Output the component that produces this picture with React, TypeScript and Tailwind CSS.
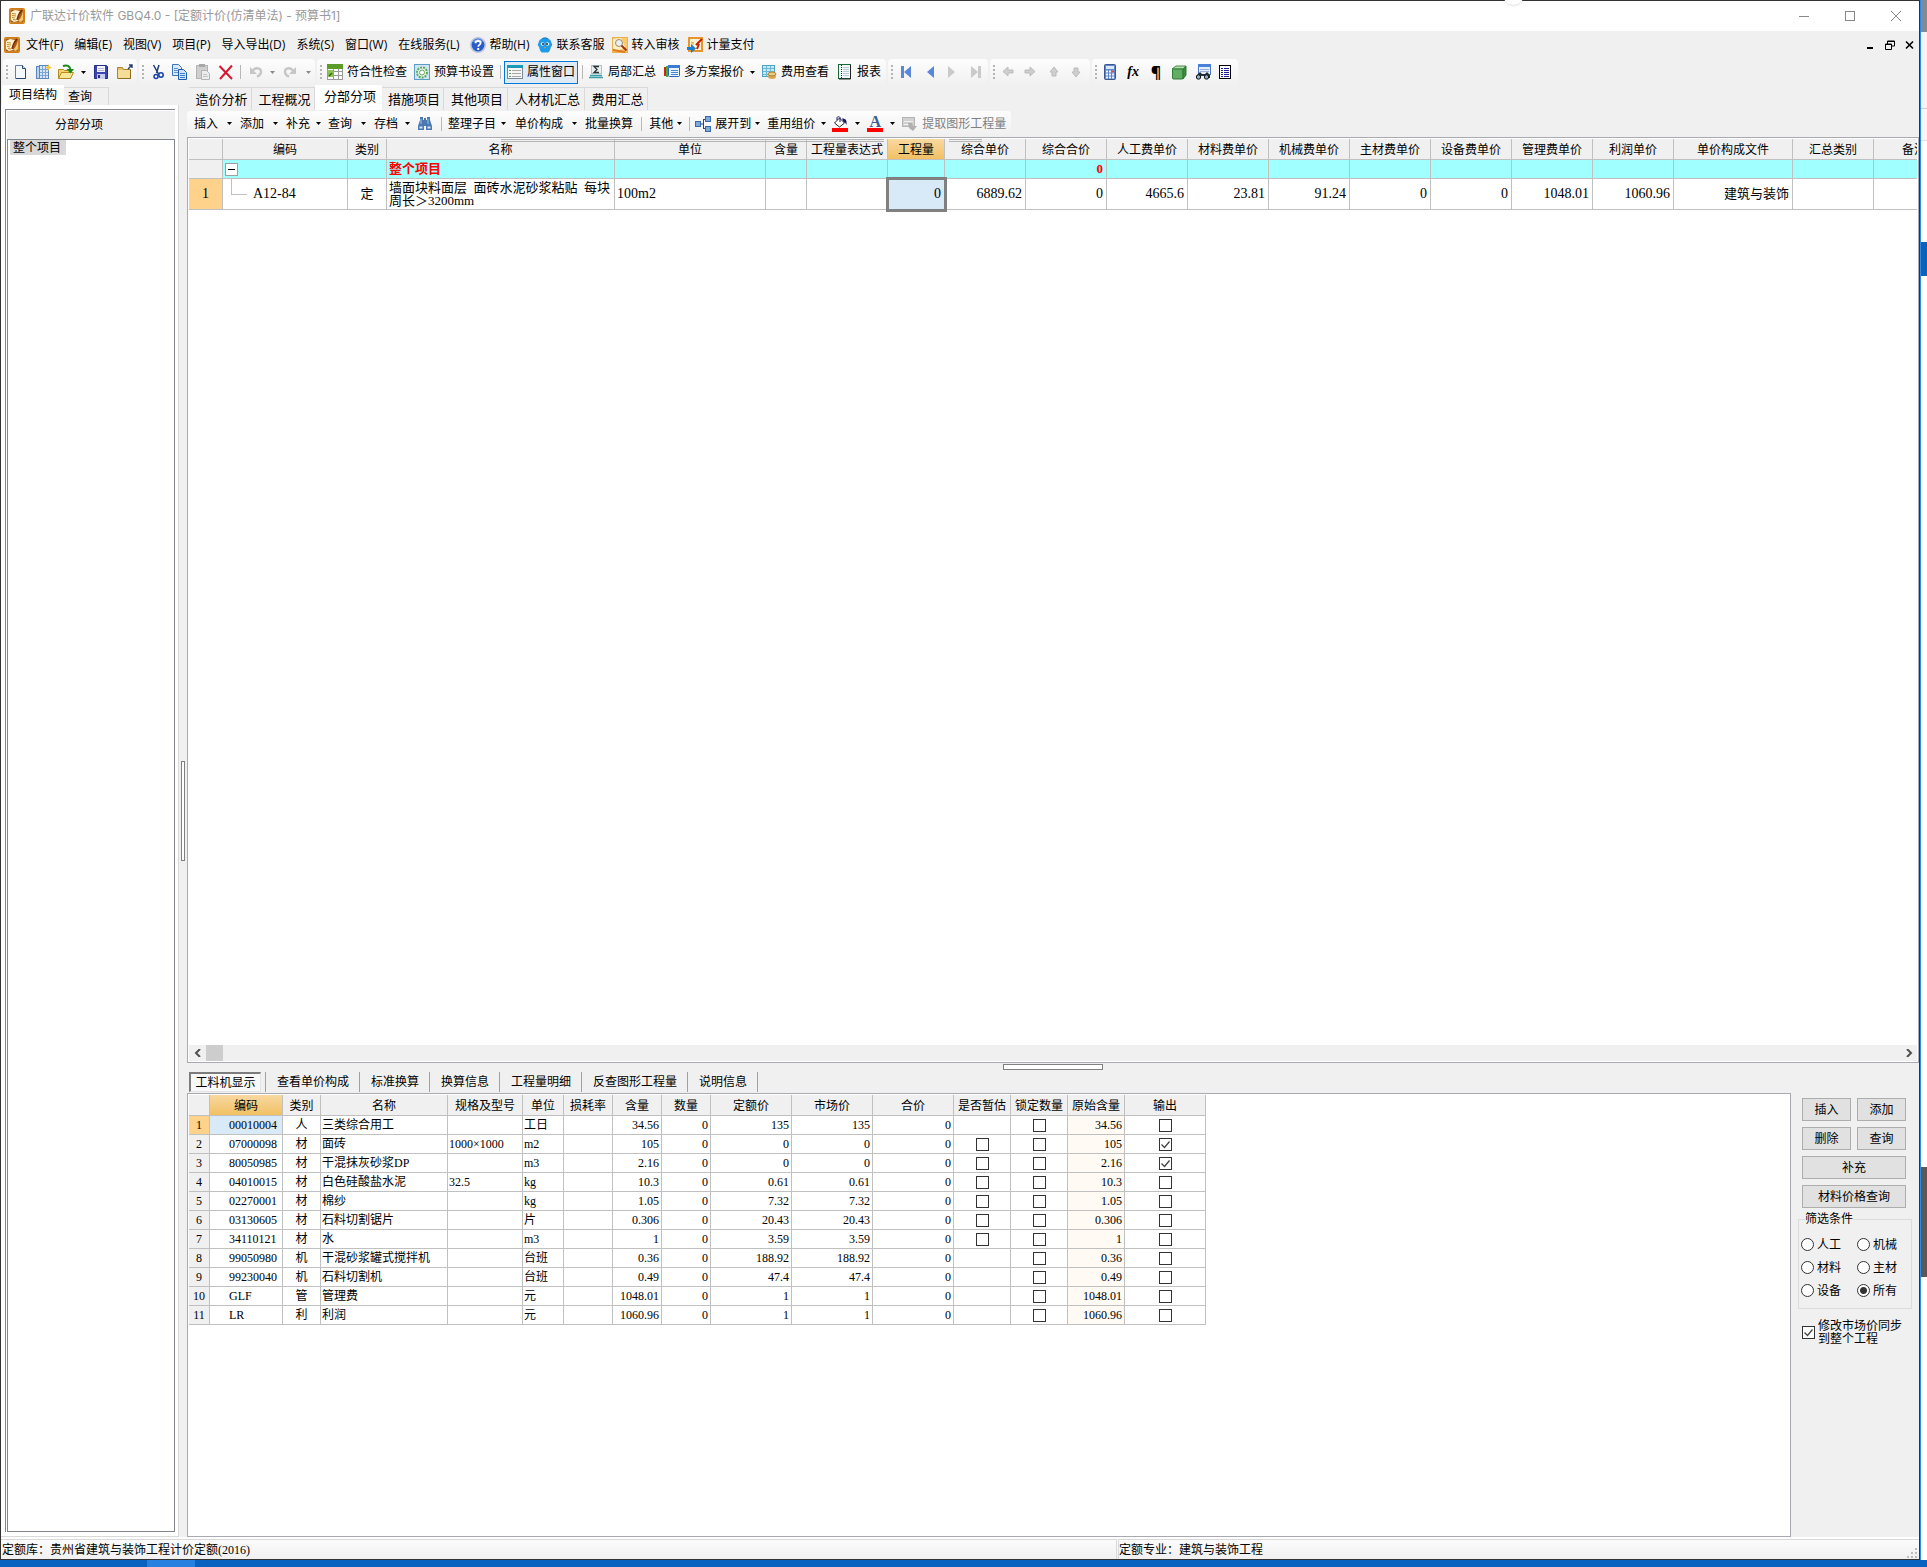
import type { ReactNode } from 'react';
import clsx from 'clsx';

type Align = 'left' | 'center' | 'right';

/* ---------- icons ---------- */

function Svg({ children, size = 'size-4' }: { children: ReactNode; size?: string }) {
  return (
    <svg className={clsx(size, 'shrink-0')} viewBox="0 0 16 16" fill="none" aria-hidden="true">
      {children}
    </svg>
  );
}

const AppIcon = () => (
  <Svg>
    <rect x="0.5" y="0.5" width="15" height="15" rx="1" fill="#f0a830" stroke="#d07a18" />
    <rect x="1.5" y="1.5" width="13" height="13" fill="#a85a18" />
    <path d="M2 4l4-2 5 1-2 5v5l-4 1-3-2z" fill="#fff3d0" />
    <path d="M3 5.500l4 .5M3 7.500l4 .5M3 9.500l3 .5M4 11.500l3 .5" stroke="#c98a2a" />
    <path d="M13 2c-2 2-4 5-5 10" stroke="#7a2c08" strokeWidth="1.4" />
    <path d="M14 3c-1 4-2 7-5 10l3 1 2-2z" fill="#f3c86a" />
  </Svg>
);

const HelpIcon = () => (
  <Svg>
    <circle cx="8" cy="8" r="7.200" fill="#2a5cc8" stroke="#b8c6de" strokeWidth="1.600" />
    <path d="M4 5c2-3 6-3 8 0" stroke="#7fa6ec" strokeWidth="1.500" />
    <path d="M5.500 6.200C5.600 4.600 6.700 4 8 4c1.500 0 2.600.8 2.600 2.100C10.600 7.800 8.200 7.900 8.200 9.700" stroke="#fff" strokeWidth="1.800" />
    <rect x="7.200" y="11" width="2" height="2" fill="#fff" />
  </Svg>
);

const ServiceIcon = () => (
  <Svg>
    <path d="M8 1c4 0 6 2 6.500 5 1 1 1 3-.5 3.500-.5 3-2 6-3 6H5c-1 0-2.500-3-3-6C.5 9 .5 7 1.500 6 2 3 4 1 8 1z" fill="#1f9bea" />
    <path d="M5 2c1-1 4-2 6 0" stroke="#0d6fb8" />
    <circle cx="5.500" cy="7" r="1.800" fill="#dff2ff" />
    <circle cx="10.500" cy="7" r="1.800" fill="#dff2ff" />
    <circle cx="6" cy="7" r="0.900" fill="#111" />
    <circle cx="10" cy="7" r="0.900" fill="#111" />
    <path d="M7 10h2l-1 1.500z" fill="#f0a020" />
  </Svg>
);

const AuditIcon = () => (
  <Svg>
    <rect x="0.500" y="0.500" width="15" height="15" fill="#f9c96a" stroke="#eab04e" />
    <path d="M1 2l8-1 4 9-7 4-5-3z" fill="#fff0c8" />
    <circle cx="7" cy="6" r="3.500" fill="#e8f0f4" stroke="#9a8a6a" />
    <path d="M9.500 8.500l5 5" stroke="#a03010" strokeWidth="2" />
    <path d="M1 13l12 2" stroke="#e07a20" strokeWidth="2" />
  </Svg>
);

const PayIcon = () => (
  <Svg>
    <rect x="2" y="1" width="13" height="13" fill="#fff4d6" stroke="#e8952e" strokeWidth="2" />
    <path d="M15 2L9 8M12 7l-2 5" stroke="#c0200a" strokeWidth="2" />
    <path d="M4 5l3 1M4 7h3" stroke="#d8a860" />
    <path d="M0 10h4V7l5 4.500L4 16v-3H0z" fill="#1d7fd0" />
  </Svg>
);

const NewIcon = () => (
  <Svg>
    <path d="M2.500 1.500h7l3 3v10h-10z" fill="#f4f8fd" stroke="#5f7fa4" />
    <path d="M9.500 1.500v3h3" fill="#d0dff0" stroke="#27486e" />
    <path d="M12.500 5v9.500H3" stroke="#27486e" />
  </Svg>
);

const NewBookIcon = () => (
  <Svg>
    <rect x="0.500" y="2.500" width="9" height="12" fill="#b9d2ee" stroke="#5b86b8" />
    <rect x="3.500" y="1.500" width="9" height="13" fill="#d8e7f7" stroke="#5b86b8" />
    <path d="M6.500 2v12M9.500 2v12M4 5.500h8M4 8.500h8M4 11.500h8" stroke="#7fa4cf" />
    <path d="M12.500 0l1 2.500L16 3.500l-2.500 1-1 2.500-1-2.500L9 3.500l2.500-1z" fill="#f5c430" />
  </Svg>
);

const OpenIcon = () => (
  <Svg>
    <path d="M0.500 5.500h5l1 1h6v8h-12z" fill="#f6d368" stroke="#b58a20" />
    <path d="M0.500 14.500l3-6h12l-3 6z" fill="#fbe796" stroke="#b58a20" />
    <path d="M5 2c4-1.500 7 0 7.500 4" stroke="#188a18" strokeWidth="2" />
    <path d="M8.500 5H16l-3.500 4.500z" fill="#188a18" />
  </Svg>
);

const SaveIcon = () => (
  <Svg>
    <path d="M1.500 1.500h12l1 1v12h-13z" fill="#3c45b4" stroke="#242c84" />
    <rect x="4" y="2" width="8" height="6" fill="#f4f4fb" />
    <path d="M5 4.500h6M5 6.500h6" stroke="#b6b6d0" />
    <rect x="4" y="10" width="8" height="5" fill="#c9ccec" />
    <rect x="5" y="11" width="2" height="3" fill="#242c84" />
  </Svg>
);

const FolderIcon = () => (
  <Svg>
    <path d="M0.500 3.500h5l1 2h7v9h-13z" fill="#e8c069" stroke="#a9842c" />
    <path d="M1 6h12v8H1z" fill="#f5dc97" />
    <path d="M11 5l4-4M12 1h3v3" stroke="#26406e" strokeWidth="1.400" />
    <path d="M13.500 6v8.500H1" stroke="#8e6f20" />
  </Svg>
);

const CutIcon = () => (
  <Svg>
    <path d="M3.500 1l5 9M9 1L6.500 9" stroke="#1d3f78" strokeWidth="1.500" />
    <circle cx="6" cy="12.500" r="2" stroke="#1440a8" strokeWidth="1.500" />
    <circle cx="11" cy="11" r="2.200" stroke="#1440a8" strokeWidth="1.500" />
  </Svg>
);

const CopyIcon = () => (
  <Svg>
    <path d="M0.500 0.500h6l3 3v8h-9z" fill="#dbe9fb" stroke="#3b74c0" />
    <path d="M2 4.500h4M2 6.500h4M2 8.500h4" stroke="#5e95dc" />
    <path d="M6.500 5.500h5l3 3v7h-8z" fill="#cfe2fa" stroke="#1e5cae" />
    <path d="M8 9.500h5M8 11.500h5M8 13.500h5" stroke="#3f7fd0" />
  </Svg>
);

const PasteIcon = () => (
  <Svg>
    <rect x="1.500" y="1.500" width="11" height="13" fill="#cfcfcf" stroke="#b4b4b4" />
    <rect x="4" y="0" width="6" height="3" fill="#a8a8a8" />
    <path d="M6.500 6.500h5l3 3v6h-8z" fill="#ededed" stroke="#b4b4b4" />
    <path d="M8 10.500h4M8 12.500h5" stroke="#c4c4c4" />
  </Svg>
);

const DeleteIcon = () => (
  <Svg>
    <path d="M1.500 2L14 15M14 1.500L2 15" stroke="#d81830" strokeWidth="2" />
  </Svg>
);

const UndoIcon = ({ flip = false }: { flip?: boolean }) => (
  <Svg>
    <g transform={flip ? 'translate(16 0) scale(-1 1)' : undefined}>
      <path d="M5 6.500c3-4 8-2 8 1 0 2-1 4-4 5" stroke="#c6c6c6" strokeWidth="2.400" />
      <path d="M2 3v7h7z" fill="#c6c6c6" />
    </g>
  </Svg>
);

const CheckTableIcon = () => (
  <Svg>
    <rect x="0.500" y="0.500" width="15" height="15" fill="#fff" stroke="#9a9a9a" />
    <rect x="0" y="0" width="16" height="5" fill="#5b9b28" />
    <path d="M1 7.500h14M1 11.500h14M6.500 5v10M11.500 5v10" stroke="#9a9a9a" />
    <rect x="1" y="6" width="5" height="7" fill="#8cc45a" />
    <path d="M2 12l3-3" stroke="#2d6a0c" strokeWidth="1.500" />
  </Svg>
);

const BudgetIcon = () => (
  <Svg>
    <rect x="0.500" y="0.500" width="15" height="15" fill="#cfe6f4" stroke="#5c9cc8" />
    <circle cx="8" cy="8.500" r="5" stroke="#62a862" strokeWidth="2" strokeDasharray="2 1" fill="#e9f7e6" />
    <circle cx="8" cy="8.500" r="2.500" stroke="#62a862" fill="#fff" />
  </Svg>
);

const PropertyIcon = () => (
  <Svg>
    <rect x="0.500" y="1.500" width="15" height="13" fill="#f6f6f4" stroke="#7a8a94" />
    <rect x="0" y="1" width="16" height="3" fill="#1a9ab8" />
    <path d="M2 6.500h2M2 9.500h2M2 12.500h2" stroke="#58a060" />
    <path d="M5 6.500h9M5 9.500h9M5 12.500h9" stroke="#a8a8a8" />
  </Svg>
);

const SumIcon = () => (
  <Svg>
    <rect x="3.500" y="1.500" width="10" height="8" fill="#e6f0f2" stroke="#a8c4cc" />
    <path d="M11 2.500H6l3 3-3 3h5" stroke="#333" strokeWidth="1.300" />
    <path d="M2 11.500h12M1 13.500h14" stroke="#3aa0a8" strokeWidth="1.500" />
  </Svg>
);

const PlansIcon = () => (
  <Svg>
    <path d="M1 3v9" stroke="#d02818" strokeWidth="2" />
    <path d="M3 2v11" stroke="#48a838" strokeWidth="2" />
    <rect x="4.500" y="1.500" width="11" height="11" rx="1" fill="#e8f2fc" stroke="#2a66c0" />
    <rect x="4" y="1" width="12" height="3" fill="#3a7ad4" />
    <path d="M7 6.500h7M7 8.500h7M7 10.500h7" stroke="#4a86d8" />
  </Svg>
);

const FeeIcon = () => (
  <Svg>
    <rect x="1.500" y="1.500" width="12" height="11" fill="#c8e8f4" stroke="#4ea4c4" />
    <path d="M2 4.500h11M2 7.500h11M2 10.500h11M5.500 2v10M9.500 2v10" stroke="#6cb8d4" />
    <ellipse cx="11" cy="12.500" rx="4" ry="2.500" fill="#d8a850" />
    <ellipse cx="11" cy="10" rx="4" ry="2" fill="#ecca80" stroke="#b08030" />
  </Svg>
);

const ReportIcon = () => (
  <Svg>
    <rect x="1.500" y="0.500" width="12" height="14" fill="#f4f8fa" stroke="#156a38" />
    <path d="M4.500 1v13" stroke="#222" strokeDasharray="1 1" />
    <path d="M6 3.500h6M6 5.500h6M6 7.500h6M6 9.500h6M6 11.500h6" stroke="#b8ccd8" />
    <path d="M13.500 1v14H2" stroke="#222" />
  </Svg>
);

const PlayIcon = ({ disabled = false, flip = false, bar = false }: { disabled?: boolean; flip?: boolean; bar?: boolean }) => (
  <Svg>
    <g transform={flip ? 'translate(16 0) scale(-1 1)' : undefined} fill={disabled ? '#cacaca' : '#5a86dc'}>
      <path d="M4 2v12l7-6z" />
      {bar && <rect x="11" y="2" width="3" height="12" />}
    </g>
  </Svg>
);

const ArrowIcon = ({ d }: { d: string }) => (
  <Svg>
    <path d={d} fill="#cfcfcf" stroke="#bababa" />
  </Svg>
);

const CalcIcon = () => (
  <Svg>
    <rect x="2.500" y="0.500" width="11" height="15" rx="1" fill="#5d86cc" stroke="#38588e" />
    <rect x="4" y="2" width="8" height="3" fill="#dbe8f8" />
    <path d="M4 7.500h8M4 10.500h8M4 13.500h8" stroke="#eef3fb" strokeWidth="2" strokeDasharray="2 1" />
    <path d="M10 7.500h2" stroke="#d84848" strokeWidth="2" />
  </Svg>
);

const CubeIcon = () => (
  <Svg>
    <path d="M1 5l4-3h10l-3 3z" fill="#b8e0b4" stroke="#3f8a44" />
    <rect x="1.500" y="5" width="10.500" height="10" rx="1" fill="#5fae62" stroke="#2f7a34" />
    <path d="M12 5l3-3v9l-3 4z" fill="#3c8a40" stroke="#2f7a34" />
  </Svg>
);

const FindTableIcon = () => (
  <Svg>
    <rect x="3.500" y="0.500" width="12" height="10" fill="#e4ecf8" stroke="#4a78c4" />
    <rect x="3" y="0" width="13" height="3" fill="#4a80d8" />
    <path d="M5 5.500h9M5 7.500h9" stroke="#98b0d4" />
    <path d="M2 11l3-3 2 2h3l2-2 3 3v3h-4v-2H6v2H1z" fill="#20303c" />
    <circle cx="3.500" cy="13" r="2.200" fill="#8ab0d0" stroke="#111" />
    <circle cx="11.500" cy="13" r="2.200" fill="#8ab0d0" stroke="#111" />
  </Svg>
);

const ListIcon = () => (
  <Svg>
    <rect x="2.500" y="1.500" width="11" height="13" fill="#fff" stroke="#000" />
    <path d="M4 4.500h2M4 6.500h2M4 8.500h2M4 10.500h2M4 12.500h2M7 4.500h5M7 6.500h5M7 8.500h5M7 10.500h5M7 12.500h5" stroke="#1c1c8c" />
  </Svg>
);

const BinocularsIcon = () => (
  <Svg>
    <path d="M3 1h3v3h1V2h2v2h1V1h3v3l2 6v4h-6v-4H7v4H1v-4l2-6z" fill="#4a78b0" />
    <path d="M2.500 10.500h3v2h-3zM10.500 10.500h3v2h-3z" fill="#d4e4f4" />
    <path d="M4 3v5M11 3v5" stroke="#a4c4e4" />
  </Svg>
);

const ExpandIcon = () => (
  <Svg>
    <path d="M5 8h3M8.500 3v10M8 3.500h3M8 12.500h3" stroke="#27486e" />
    <rect x="0.500" y="5.500" width="5" height="5" fill="#7fa8dc" stroke="#3a68a8" />
    <rect x="10.500" y="0.500" width="5" height="5" fill="#7fa8dc" stroke="#3a68a8" />
    <rect x="10.500" y="10.500" width="5" height="5" fill="#7fa8dc" stroke="#3a68a8" />
  </Svg>
);

const BucketIcon = () => (
  <Svg>
    <rect x="0" y="12" width="16" height="4" fill="#f00" />
    <path d="M2.500 7l5-5 5 5-5 4z" fill="#fff" stroke="#222" />
    <path d="M5 4V1.500c0-1 3-1 3 0V6" stroke="#18186c" />
    <path d="M10 2.500c4 0 5 2 4.500 6.500-1-2-1.500-3-3-3z" fill="#18186c" />
  </Svg>
);

const FontColorIcon = () => (
  <span className="flex h-4 w-4 shrink-0 items-center justify-center border-b-4 border-[#ff0000] font-['Liberation_Serif',serif] text-[16px] leading-none font-bold text-[#3a5c94]">
    A
  </span>
);

const ExtractIcon = () => (
  <Svg>
    <rect x="0.500" y="1.500" width="12" height="9" fill="#d0d0d0" stroke="#b4b4b4" />
    <path d="M2 5.500h9M2 8.500h5" stroke="#f0f0f0" />
    <path d="M6 7h4l1 3h4l-4 5-4-3z" fill="#b0b0b0" />
  </Svg>
);

/* ---------- toolbar pieces ---------- */

function Caret({ className, muted = false }: { className: string; muted?: boolean }) {
  return (
    <button type="button" aria-label="更多" className={clsx('flex h-full shrink-0 items-center justify-center', className)}>
      <svg className="h-[3px] w-[5px]" viewBox="0 0 5 3" aria-hidden="true">
        <path d="M0 0h5L2.500 3z" fill={muted ? '#8a8a8a' : '#000'} />
      </svg>
    </button>
  );
}

function Grip() {
  return (
    <span className="flex w-2 shrink-0 flex-col items-center justify-center gap-[2px]">
      {[0, 1, 2, 3].map((i) => (
        <i key={i} className="block size-[2px] bg-[#b4b4b4]" />
      ))}
    </span>
  );
}

function IconButton({ label, className, children }: { label: string; className: string; children: ReactNode }) {
  return (
    <button type="button" aria-label={label} className={clsx('flex shrink-0 items-center justify-center', className)}>
      {children}
    </button>
  );
}

function TextButton({ icon, children, className }: { icon?: ReactNode; children: ReactNode; className?: string }) {
  return (
    <button type="button" className={clsx('flex shrink-0 items-center gap-1 whitespace-nowrap', className)}>
      {icon}
      {children}
    </button>
  );
}

const Sep = ({ className }: { className: string }) => <span className={clsx('h-[14px] w-px shrink-0 bg-[#b8b8b8]', className)} />;

function Group({ children, className }: { children: ReactNode; className?: string }) {
  return (
    <div className={clsx('flex h-full items-center rounded-t-sm bg-linear-to-b from-[#fdfdfd] to-[#f0f0f0]', className)}>
      {children}
    </div>
  );
}

/* ---------- header rows ---------- */

function TitleBar() {
  return (
    <header className="flex h-[30px] shrink-0 items-center bg-white pl-2 text-[#999]">
      <AppIcon />
      <h1 className="ml-[5px] font-['Inter','Noto_Sans_CJK_SC',sans-serif] text-[12px] whitespace-nowrap">
        广联达计价软件 GBQ4.0 - [定额计价(仿清单法) - 预算书1]
      </h1>
      <div className="ml-auto flex h-full">
        <IconButton label="最小化" className="w-[46px]">
          <svg className="size-[10px]" viewBox="0 0 10 10"><path d="M0 5.500h10" stroke="#888" /></svg>
        </IconButton>
        <IconButton label="最大化" className="w-[46px]">
          <svg className="size-[10px]" viewBox="0 0 10 10"><rect x="0.500" y="0.500" width="9" height="9" fill="none" stroke="#888" /></svg>
        </IconButton>
        <IconButton label="关闭" className="w-[46px]">
          <svg className="size-[10px]" viewBox="0 0 10 10"><path d="M0 0l10 10M10 0L0 10" stroke="#888" /></svg>
        </IconButton>
      </div>
    </header>
  );
}

const MENUS = ['文件(F)', '编辑(E)', '视图(V)', '项目(P)', '导入导出(D)', '系统(S)', '窗口(W)', '在线服务(L)'];

function MenuBar() {
  return (
    <nav className="flex h-7 shrink-0 items-center pl-[3px]">
      <AppIcon />
      <div className="ml-[6px] flex gap-[11px]">
        {MENUS.map((m) => (
          <button key={m} type="button" className="whitespace-nowrap">{m}</button>
        ))}
      </div>
      <div className="ml-[10px] flex gap-[7px]">
        <TextButton icon={<HelpIcon />}>帮助(H)</TextButton>
        <TextButton icon={<ServiceIcon />}>联系客服</TextButton>
        <TextButton icon={<AuditIcon />}>转入审核</TextButton>
        <TextButton icon={<PayIcon />}>计量支付</TextButton>
      </div>
      <div className="ml-auto flex gap-[10px] pr-1">
        <IconButton label="最小化文档" className="w-[10px]">
          <svg className="size-[10px]" viewBox="0 0 10 10"><path d="M2 8h6" stroke="#000" strokeWidth="2" /></svg>
        </IconButton>
        <IconButton label="还原文档" className="w-[10px]">
          <svg className="size-[10px]" viewBox="0 0 10 10" fill="none" stroke="#000">
            <path d="M2.500 4V1h7v5H7M2.500 1.500h7" />
            <path d="M0.500 4h6v5.500h-6zM0.500 4.500h6" />
          </svg>
        </IconButton>
        <IconButton label="关闭文档" className="w-[10px]">
          <svg className="size-[10px]" viewBox="0 0 10 10"><path d="M1 1.500l7 7M8 1.500l-7 7" stroke="#000" strokeWidth="1.600" /></svg>
        </IconButton>
      </div>
    </nav>
  );
}

function MainToolbar() {
  return (
    <div className="flex h-[26px] shrink-0 gap-[2px] pl-[2px]">
      <Group>
        <Grip />
        <IconButton label="新建" className="w-5"><NewIcon /></IconButton>
        <IconButton label="新建预算书" className="w-[25px]"><NewBookIcon /></IconButton>
        <IconButton label="打开" className="w-5"><OpenIcon /></IconButton>
        <Caret className="w-[14px]" />
        <IconButton label="保存" className="w-[22px]"><SaveIcon /></IconButton>
        <IconButton label="目录" className="w-[25px]"><FolderIcon /></IconButton>
      </Group>
      <Group>
        <Grip />
        <IconButton label="剪切" className="w-[22px]"><CutIcon /></IconButton>
        <IconButton label="复制" className="w-[22px]"><CopyIcon /></IconButton>
        <IconButton label="粘贴" className="w-6"><PasteIcon /></IconButton>
        <IconButton label="删除行" className="w-[22px]"><DeleteIcon /></IconButton>
        <Sep className="mr-1 ml-[3px]" />
        <IconButton label="撤销" className="w-[21px]"><UndoIcon /></IconButton>
        <Caret className="w-3" muted />
        <IconButton label="恢复" className="w-6"><UndoIcon flip /></IconButton>
        <Caret className="w-[13px]" muted />
      </Group>
      <Group className="pr-[5px]">
        <Grip />
        <TextButton className="ml-[2px]" icon={<CheckTableIcon />}>符合性检查</TextButton>
        <TextButton className="ml-[7px]" icon={<BudgetIcon />}>预算书设置</TextButton>
        <Sep className="mr-[3px] ml-[6px]" />
        <TextButton className="h-[23px] border border-[#0078d7] bg-[#dfeaf5] px-[2px]" icon={<PropertyIcon />}>属性窗口</TextButton>
        <Sep className="mr-[5px] ml-1" />
        <TextButton icon={<SumIcon />}>局部汇总</TextButton>
        <TextButton className="ml-2" icon={<PlansIcon />}>多方案报价</TextButton>
        <Caret className="w-4" />
        <TextButton className="ml-px" icon={<FeeIcon />}>费用查看</TextButton>
        <TextButton className="ml-2" icon={<ReportIcon />}>报表</TextButton>
      </Group>
      <Group>
        <Grip />
        <IconButton label="首个" className="w-[21px]"><PlayIcon flip bar /></IconButton>
        <IconButton label="上一个" className="w-[26px]"><PlayIcon flip /></IconButton>
        <IconButton label="下一个" className="w-[18px]"><PlayIcon disabled /></IconButton>
        <IconButton label="末个" className="w-[27px]"><PlayIcon disabled bar /></IconButton>
      </Group>
      <Group className="pr-1">
        <Grip />
        <IconButton label="左移" className="w-5"><ArrowIcon d="M3 7.500l5-4.500v3h5v3H8v3z" /></IconButton>
        <IconButton label="右移" className="w-6"><ArrowIcon d="M13 7.500L8 3v3H3v3h5v3z" /></IconButton>
        <IconButton label="上移" className="w-6"><ArrowIcon d="M8 3l4 5h-2v4H6V8H4z" /></IconButton>
        <IconButton label="下移" className="w-5"><ArrowIcon d="M8 13l4-5h-2V4H6v4H4z" /></IconButton>
      </Group>
      <Group className="pr-[2px]">
        <Grip />
        <IconButton label="计算器" className="w-5"><CalcIcon /></IconButton>
        <IconButton label="函数" className="w-[26px] font-['Liberation_Serif',serif] text-[14px] leading-none font-bold italic">fx</IconButton>
        <IconButton label="段落" className="w-5 text-[16px] leading-none font-bold">¶</IconButton>
        <IconButton label="图形" className="w-[26px]"><CubeIcon /></IconButton>
        <IconButton label="查找" className="w-[22px]"><FindTableIcon /></IconButton>
        <IconButton label="列表" className="w-[22px]"><ListIcon /></IconButton>
      </Group>
    </div>
  );
}

function EditToolbar() {
  return (
    <div className="flex h-[26px] shrink-0 pb-px">
      <Group className="pr-[5px] pl-[7px]">
        <TextButton>插入</TextButton>
        <Caret className="w-[22px]" />
        <TextButton>添加</TextButton>
        <Caret className="w-[22px]" />
        <TextButton>补充</TextButton>
        <Caret className="w-4" />
        <TextButton className="ml-[2px]">查询</TextButton>
        <Caret className="w-[22px]" />
        <TextButton>存档</TextButton>
        <Caret className="w-[19px]" />
        <IconButton label="查找" className="w-4"><BinocularsIcon /></IconButton>
        <Sep className="mr-[6px] ml-2" />
        <TextButton>整理子目</TextButton>
        <Caret className="mr-[5px] w-[14px]" />
        <TextButton>单价构成</TextButton>
        <Caret className="w-[22px]" />
        <TextButton>批量换算</TextButton>
        <Sep className="mr-[7px] ml-2" />
        <TextButton>其他</TextButton>
        <Caret className="w-3" />
        <Sep className="mr-[5px] ml-1" />
        <TextButton icon={<ExpandIcon />}>展开到</TextButton>
        <Caret className="mr-1 w-3" />
        <TextButton>重用组价</TextButton>
        <Caret className="w-[17px]" />
        <IconButton label="填充颜色" className="w-4"><BucketIcon /></IconButton>
        <Caret className="w-[19px]" />
        <IconButton label="字体颜色" className="w-4"><FontColorIcon /></IconButton>
        <Caret className="w-[19px]" />
        <TextButton className="text-[#808080]" icon={<ExtractIcon />}>提取图形工程量</TextButton>
      </Group>
    </div>
  );
}

/* ---------- left panel ---------- */

function Sidebar() {
  return (
    <aside className="flex w-[178px] shrink-0 flex-col">
      <div className="flex h-5 items-end pl-px">
        <button type="button" className="h-5 w-[62px] bg-white pb-px leading-4">项目结构</button>
        <button type="button" className="h-[18px] w-[45px] border-t border-r border-[#d9d9d9] pr-3 leading-4">查询</button>
      </div>
      <div className="flex flex-1 flex-col border-r border-b border-[#d9d9d9] bg-white pt-1 pr-[3px] pb-1 pl-1">
        <div className="flex flex-1 flex-col border-t border-l border-[#82868c] pt-px pl-px">
          <div className="flex h-7 items-center justify-center bg-[#f0f0f0] pr-6">分部分项</div>
          <div className="flex-1 border border-[#82868c] px-[2px]">
            <button type="button" className="h-[15px] bg-[#d9d9d9] px-[3px] pr-[5px] leading-[15px]">整个项目</button>
          </div>
        </div>
      </div>
    </aside>
  );
}

/* ---------- estimate grid ---------- */

const GRID_COLS = [
  { title: '', width: 'w-[34px]' },
  { title: '编码', width: 'w-[125px]' },
  { title: '类别', width: 'w-[39px]' },
  { title: '名称', width: 'w-[228px]' },
  { title: '单位', width: 'w-[151px]' },
  { title: '含量', width: 'w-[41px]' },
  { title: '工程量表达式', width: 'w-[81px]' },
  { title: '工程量', width: 'w-[57px]' },
  { title: '综合单价', width: 'w-[81px]' },
  { title: '综合合价', width: 'w-[81px]' },
  { title: '人工费单价', width: 'w-[81px]' },
  { title: '材料费单价', width: 'w-[81px]' },
  { title: '机械费单价', width: 'w-[81px]' },
  { title: '主材费单价', width: 'w-[81px]' },
  { title: '设备费单价', width: 'w-[81px]' },
  { title: '管理费单价', width: 'w-[81px]' },
  { title: '利润单价', width: 'w-[81px]' },
  { title: '单价构成文件', width: 'w-[119px]' },
  { title: '汇总类别', width: 'w-[81px]' },
  { title: '备注', width: 'w-[81px]' },
];

const PRICES = ['6889.62', '0', '4665.6', '23.81', '91.24', '0', '0', '1048.01', '1060.96'];

const CELL = 'overflow-hidden border-r border-b border-[#c0c0c0] whitespace-nowrap';
const HEAD = 'px-0 pt-[2px] pb-0 text-center leading-4 font-normal';

function EstimateGrid() {
  return (
    <section className="relative flex min-h-0 flex-1 flex-col border border-[#a9a9b0] bg-white p-px">
      <div className="min-h-0 flex-1 overflow-hidden font-['Liberation_Serif','Noto_Sans_CJK_SC',serif]">
        <table className="w-[1766px] table-fixed border-separate border-spacing-0">
          <thead>
            <tr className="h-[21px] bg-[#f0f0f0]">
              {GRID_COLS.map((c) => (
                <th
                  key={c.title}
                  className={clsx(CELL, HEAD, c.width, c.title === '工程量' && 'bg-linear-to-b from-[#f9d9a0] to-[#f0c062]')}
                >
                  {c.title}
                </th>
              ))}
            </tr>
          </thead>
          <tbody>
            <tr className="h-[19px] bg-[#a0ffff] text-[13px] leading-4 font-bold text-[#ff0000]">
              <td className={clsx(CELL, 'bg-[#f0f0f0] p-0')} />
              <td className={clsx(CELL, 'p-0')}>
                <button type="button" aria-label="折叠" className="ml-[2px] flex size-[13px] items-center justify-center border border-[#a0a0a0] bg-white">
                  <span className="h-px w-[7px] bg-black" />
                </button>
              </td>
              <td className={clsx(CELL, 'p-0')} />
              <td className={clsx(CELL, 'px-[2px] py-0')}>整个项目</td>
              {[4, 5, 6, 7, 8].map((i) => (
                <td key={i} className={clsx(CELL, 'p-0')} />
              ))}
              <td className={clsx(CELL, 'px-[3px] py-0 text-right')}>0</td>
              {GRID_COLS.slice(10).map((c) => (
                <td key={c.title} className={clsx(CELL, 'p-0')} />
              ))}
            </tr>
            <tr className="h-[31px] text-[14px] leading-4">
              <th scope="row" className={clsx(CELL, 'bg-[#ffd28c] p-0 font-normal')}>1</th>
              <td className={clsx(CELL, 'p-0')}>
                <div className="flex h-[30px]">
                  <span className="ml-2 h-4 w-4 shrink-0 border-b border-l border-[#c0c0c0]" />
                  <span className="self-center pl-[6px]">A12-84</span>
                </div>
              </td>
              <td className={clsx(CELL, 'p-0 text-center text-[13px]')}>定</td>
              <td className="border-r border-b border-[#c0c0c0] px-[2px] py-0 text-[13px] leading-[13px]">
                墙面块料面层&nbsp; 面砖水泥砂浆粘贴&nbsp; 每块<br />周长＞3200mm
              </td>
              <td className={clsx(CELL, 'px-[2px] py-0')}>100m2</td>
              <td className={clsx(CELL, 'p-0')} />
              <td className={clsx(CELL, 'p-0')} />
              <td className={clsx(CELL, 'bg-[#d8e9f8] px-[3px] py-0 text-right outline-[3px] -outline-offset-1 outline-[#808080]')}>0</td>
              {PRICES.map((p, i) => (
                <td key={i} className={clsx(CELL, 'px-[3px] py-0 text-right')}>{p}</td>
              ))}
              <td className={clsx(CELL, 'px-[3px] py-0 text-right text-[13px]')}>建筑与装饰</td>
              <td className={clsx(CELL, 'p-0')} />
              <td className={clsx(CELL, 'p-0')} />
            </tr>
          </tbody>
        </table>
      </div>
      {/* band markers over the header */}
      <span className="absolute top-px left-[313px] h-[3px] w-[383px] border-y border-[#b4b4b4]" />
      <span className="absolute top-px left-[761px] h-[3px] w-[33px] border-y border-[#b4b4b4]" />
      <div className="flex h-4 shrink-0 items-center bg-[#f0f0f0]">
        <IconButton label="向左滚动" className="w-[17px]">
          <svg className="size-2" viewBox="0 0 8 8"><path d="M6 0L2 4l4 4" fill="none" stroke="#505050" strokeWidth="2" /></svg>
        </IconButton>
        <span className="h-full w-[17px] bg-[#cdcdcd]" />
        <IconButton label="向右滚动" className="ml-auto w-[17px]">
          <svg className="size-2" viewBox="0 0 8 8"><path d="M2 0l4 4-4 4" fill="none" stroke="#505050" strokeWidth="2" /></svg>
        </IconButton>
      </div>
    </section>
  );
}

/* ---------- resource grid ---------- */

function Checkbox({ label, checked = false, id }: { label?: string; checked?: boolean; id?: string }) {
  return (
    <span className="inline-grid size-[13px] shrink-0 align-middle">
      <input
        id={id}
        type="checkbox"
        aria-label={label}
        defaultChecked={checked}
        className="peer col-start-1 row-start-1 size-[13px] appearance-none border border-[#333] bg-white"
      />
      <svg className="pointer-events-none col-start-1 row-start-1 hidden size-[13px] peer-checked:block" viewBox="0 0 13 13">
        <path d="M2.500 6.500l3 3 5-6" fill="none" stroke="#444" strokeWidth="1.300" />
      </svg>
    </span>
  );
}

const RES_COLS: { title: string; width: string; align: Align }[] = [
  { title: '编码', width: 'w-[73px]', align: 'left' },
  { title: '类别', width: 'w-[38px]', align: 'center' },
  { title: '名称', width: 'w-[127px]', align: 'left' },
  { title: '规格及型号', width: 'w-[75px]', align: 'left' },
  { title: '单位', width: 'w-[41px]', align: 'left' },
  { title: '损耗率', width: 'w-[49px]', align: 'right' },
  { title: '含量', width: 'w-[49px]', align: 'right' },
  { title: '数量', width: 'w-[49px]', align: 'right' },
  { title: '定额价', width: 'w-[81px]', align: 'right' },
  { title: '市场价', width: 'w-[81px]', align: 'right' },
  { title: '合价', width: 'w-[81px]', align: 'right' },
  { title: '是否暂估', width: 'w-[57px]', align: 'center' },
  { title: '锁定数量', width: 'w-[57px]', align: 'center' },
  { title: '原始含量', width: 'w-[57px]', align: 'right' },
  { title: '输出', width: 'w-[81px]', align: 'center' },
];

const RESOURCES = [
  { code: '00010004', kind: '人', name: '三类综合用工', spec: '', unit: '工日', qty: '34.56', price: '135' },
  { code: '07000098', kind: '材', name: '面砖', spec: '1000×1000', unit: 'm2', qty: '105', price: '0', output: true },
  { code: '80050985', kind: '材', name: '干混抹灰砂浆DP', spec: '', unit: 'm3', qty: '2.16', price: '0', output: true },
  { code: '04010015', kind: '材', name: '白色硅酸盐水泥', spec: '32.5', unit: 'kg', qty: '10.3', price: '0.61' },
  { code: '02270001', kind: '材', name: '棉纱', spec: '', unit: 'kg', qty: '1.05', price: '7.32' },
  { code: '03130605', kind: '材', name: '石料切割锯片', spec: '', unit: '片', qty: '0.306', price: '20.43' },
  { code: '34110121', kind: '材', name: '水', spec: '', unit: 'm3', qty: '1', price: '3.59' },
  { code: '99050980', kind: '机', name: '干混砂浆罐式搅拌机', spec: '', unit: '台班', qty: '0.36', price: '188.92' },
  { code: '99230040', kind: '机', name: '石料切割机', spec: '', unit: '台班', qty: '0.49', price: '47.4' },
  { code: 'GLF', kind: '管', name: '管理费', spec: '', unit: '元', qty: '1048.01', price: '1' },
  { code: 'LR', kind: '利', name: '利润', spec: '', unit: '元', qty: '1060.96', price: '1' },
];

const ALIGN: Record<Align, string> = {
  left: 'pl-px pr-0 text-left',
  center: 'px-[2px] text-center',
  right: 'px-[2px] text-right',
};

function ResourceGrid() {
  return (
    <table className="w-[1017px] table-fixed border-separate border-spacing-0 font-['Liberation_Serif','Noto_Sans_CJK_SC',serif]">
      <thead>
        <tr className="h-[21px] bg-[#f0f0f0]">
          <th className={clsx(CELL, 'w-[21px] p-0')} />
          {RES_COLS.map((c, i) => (
            <th key={c.title} className={clsx(CELL, HEAD, c.width, i === 0 && 'bg-linear-to-b from-[#f9d9a0] to-[#f0c062]')}>
              {c.title}
            </th>
          ))}
        </tr>
      </thead>
      <tbody>
        {RESOURCES.map((r, row) => {
          const cells: ReactNode[] = [
            r.code,
            r.kind,
            r.name,
            r.spec,
            r.unit,
            '',
            r.qty,
            '0',
            r.price,
            r.price,
            '0',
            r.kind === '材' ? <Checkbox label={`${r.name} 是否暂估`} /> : '',
            <Checkbox label={`${r.name} 锁定数量`} />,
            r.qty,
            <Checkbox label={`${r.name} 输出`} checked={r.output} />,
          ];
          return (
            <tr key={r.code} className="h-[19px] leading-4">
              <th scope="row" className={clsx(CELL, 'p-0 text-center font-normal', row === 0 ? 'bg-[#ffd28c]' : 'bg-[#f0f0f0]')}>{row + 1}</th>
              {cells.map((cell, i) => (
                <td
                  key={i}
                  className={clsx(
                    CELL,
                    'py-0',
                    i === 0 ? 'pr-0 pl-[19px] text-left' : ALIGN[RES_COLS[i].align],
                    i === 0 && row === 0 && 'bg-[#d8e9f8]',
                    i === 13 && 'bg-[#fffaf4]',
                    i > 10 && i !== 13 && 'leading-none',
                  )}
                >
                  {cell}
                </td>
              ))}
            </tr>
          );
        })}
      </tbody>
    </table>
  );
}

const FILTERS = ['人工', '机械', '材料', '主材', '设备', '所有'];

const BUTTON = 'h-[23px] border border-[#adadad] bg-[#e1e1e1] leading-4';

function ActionPanel() {
  return (
    <aside className="w-32 shrink-0 px-[7px] pt-[5px]">
      <div className="grid grid-cols-2 gap-[6px] px-1 pr-[6px]">
        <button type="button" className={BUTTON}>插入</button>
        <button type="button" className={BUTTON}>添加</button>
        <button type="button" className={BUTTON}>删除</button>
        <button type="button" className={BUTTON}>查询</button>
        <button type="button" className={clsx(BUTTON, 'col-span-2')}>补充</button>
        <button type="button" className={clsx(BUTTON, 'col-span-2')}>材料价格查询</button>
      </div>
      <fieldset className="mt-[5px] border border-[#dcdcdc] pb-[6px] pl-[2px]">
        <legend className="ml-1 leading-3">筛选条件</legend>
        <div className="grid grid-cols-[56px_auto] pt-2">
          {FILTERS.map((f) => (
            <label key={f} className="flex h-[23px] items-center gap-[3px]">
              <input
                type="radio"
                name="filter"
                defaultChecked={f === '所有'}
                className="size-[13px] appearance-none rounded-full border border-[#333] bg-white checked:bg-[radial-gradient(circle,#333_0_3px,#fff_4px)]"
              />
              {f}
            </label>
          ))}
        </div>
      </fieldset>
      <div className="mt-[10px] flex items-center gap-[3px] pl-1">
        <Checkbox id="sync-price" checked />
        <label htmlFor="sync-price" className="leading-[13px] whitespace-nowrap">
          修改市场价同步<br />到整个工程
        </label>
      </div>
    </aside>
  );
}

/* ---------- work area ---------- */

const PAGE_TABS = [
  { title: '造价分析', width: 'w-[63px]' },
  { title: '工程概况', width: 'w-[63px]' },
  { title: '分部分项', width: 'w-[67px]' },
  { title: '措施项目', width: 'w-[62px]' },
  { title: '其他项目', width: 'w-16' },
  { title: '人材机汇总', width: 'w-[77px]' },
  { title: '费用汇总', width: 'w-[63px]' },
];

const DETAIL_TABS = ['查看单价构成', '标准换算', '换算信息', '工程量明细', '反查图形工程量', '说明信息'];

function WorkArea() {
  return (
    <main className="flex min-w-0 flex-1 flex-col">
      <div className="flex h-[25px] shrink-0 items-end pl-[2px] text-[13px]">
        {PAGE_TABS.map((t) => (
          <button
            key={t.title}
            type="button"
            className={clsx(
              t.width,
              'pl-[3px] whitespace-nowrap',
              t.title === '分部分项' ? 'h-[25px] bg-white pb-[3px]' : 'h-[23px] border-t border-r border-[#d9d9d9] pb-px',
            )}
          >
            {t.title}
          </button>
        ))}
      </div>
      <div className="h-px shrink-0" />
      <EditToolbar />
      <EstimateGrid />
      <div className="flex h-2 shrink-0 items-center justify-center">
        <span className="h-[6px] w-[100px] border border-[#808080] bg-white" />
      </div>
      <div className="flex h-[22px] shrink-0 items-center pl-[2px]">
        <button type="button" className="mr-1 h-5 w-[72px] border-2 border-r border-b border-[#7c7c7c] border-r-[#e4e4e4] border-b-[#e4e4e4] bg-[#f8f8f8] leading-4">
          工料机显示
        </button>
        {DETAIL_TABS.map((t) => (
          <button key={t} type="button" className="h-5 border-l border-[#a0a0a0] pr-[10px] pl-[11px] leading-4 whitespace-nowrap last:border-r">
            {t}
          </button>
        ))}
      </div>
      <div className="flex h-[444px] shrink-0">
        <section className="min-w-0 flex-1 overflow-hidden border border-[#a9a9b0] bg-white p-px">
          <ResourceGrid />
        </section>
        <ActionPanel />
      </div>
    </main>
  );
}

function StatusBar() {
  return (
    <footer className="flex h-[22px] shrink-0 border-t-2 border-white bg-linear-to-b from-[#fcfcfc] to-[#f0f0f0] font-['Liberation_Serif','Noto_Sans_CJK_SC',serif]">
      <div className="flex w-[1116px] items-center border-t border-r border-[#d9d9d9] pl-px">定额库：贵州省建筑与装饰工程计价定额(2016)</div>
      <div className="ml-px flex flex-1 items-center justify-between border-t border-l border-[#d9d9d9]">
        定额专业：建筑与装饰工程
        <svg className="size-3 self-end" viewBox="0 0 12 12" fill="#bdbdbd" aria-hidden="true">
          <path d="M8 1h2v2H8zM8 5h2v2H8zM8 9h2v2H8zM4 5h2v2H4zM4 9h2v2H4zM0 9h2v2H0z" />
        </svg>
      </div>
    </footer>
  );
}

export default function App() {
  return (
    <div className="relative flex h-screen flex-col overflow-hidden bg-white font-['Open_Sans','Noto_Sans_CJK_SC',sans-serif] text-[12px] leading-4 text-black">
      <div className="flex min-h-0 flex-1">
        <div className="flex min-w-0 flex-1 flex-col border border-[#333] bg-[#f0f0f0]">
          <TitleBar />
          <MenuBar />
          <MainToolbar />
          <div className="flex min-h-0 flex-1">
            <Sidebar />
            <div className="flex w-2 shrink-0 items-center justify-center">
              <span className="h-[100px] w-1 border border-[#808080] bg-white" />
            </div>
            <WorkArea />
          </div>
          <StatusBar />
        </div>
        {/* sliver of the desktop behind the window */}
        <div className="flex w-[7px] shrink-0 flex-col border-l border-[#2a8cf0]">
          <span className="h-8 bg-[#7d8c9a]" />
          <span className="h-[77px] border-b border-[#ccc] bg-[#f3f3f3]" />
          <span className="h-8 border-b border-[#e0e0e0] bg-[#f6f6f6]" />
          <span className="mt-[101px] h-[34px] bg-[#0c62b8]" />
          <span className="mt-[891px] h-[110px] bg-[#595959]" />
        </div>
      </div>
      <div className="h-[7px] shrink-0 bg-[#0a62c0] pl-[147px]">
        <div className="h-full w-12 bg-[#2680e0]" />
      </div>
      <div className="absolute -top-4 left-[1503px] size-[21px] rounded-full bg-white shadow-sm" />
    </div>
  );
}
